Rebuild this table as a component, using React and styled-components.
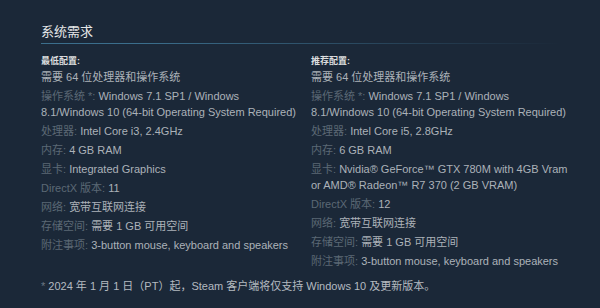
import React from "react";
import styled, { createGlobalStyle } from "styled-components";

const GlobalStyle = createGlobalStyle`
  html, body {
    margin: 0;
    padding: 0;
    background-color: #1b2838;
  }
  body {
    width: 600px;
    height: 308px;
    overflow: hidden;
  }
`;

const Page = styled.div`
  padding: 23px 40px 0 41px;
  font-family: "Liberation Sans", Arial, "Noto Sans CJK SC", sans-serif;
  font-size: 11px;
  color: #acb2b8;
`;

const Heading = styled.h2`
  margin: 0;
  font-size: 13px;
  font-weight: normal;
  line-height: 18px;
  color: #e6e7e8;
  padding-bottom: 2px;
  border-bottom: 1px solid transparent;
  border-image: linear-gradient(
      to right,
      #3b6e8c 0%,
      #3b6e8c 20%,
      rgba(59, 110, 140, 0.35) 70%,
      rgba(59, 110, 140, 0) 100%
    )
    1;
  margin-bottom: 9px;
`;

const Columns = styled.div`
  display: grid;
  grid-template-columns: 259px 260px;
  column-gap: 11px;
`;

const ColTitle = styled.div`
  font-size: 9px;
  font-weight: bold;
  line-height: 16px;
  color: #dcdedf;
`;

const List = styled.ul`
  margin: 0;
  padding: 0;
  list-style: none;
`;

const Item = styled.li`
  line-height: 16px;
  margin-bottom: 3px;
`;

const Label = styled.span`
  color: #5b6875;
`;

const Footer = styled.p`
  margin: 6px 0 0;
  line-height: 16px;
  color: #b4bac0;
`;

const Star = styled.span`
  color: #6b7784;
`;

const minimum = [
  [null, "需要 64 位处理器和操作系统"],
  ["操作系统 *:", "Windows 7.1 SP1 / Windows 8.1/Windows 10 (64-bit Operating System Required)"],
  ["处理器:", "Intel Core i3, 2.4GHz"],
  ["内存:", "4 GB RAM"],
  ["显卡:", "Integrated Graphics"],
  ["DirectX 版本:", "11"],
  ["网络:", "宽带互联网连接"],
  ["存储空间:", "需要 1 GB 可用空间"],
  ["附注事项:", "3-button mouse, keyboard and speakers"],
];

const recommended = [
  [null, "需要 64 位处理器和操作系统"],
  ["操作系统 *:", "Windows 7.1 SP1 / Windows 8.1/Windows 10 (64-bit Operating System Required)"],
  ["处理器:", "Intel Core i5, 2.8GHz"],
  ["内存:", "6 GB RAM"],
  ["显卡:", "Nvidia® GeForce™ GTX 780M with 4GB Vram or AMD® Radeon™ R7 370 (2 GB VRAM)"],
  ["DirectX 版本:", "12"],
  ["网络:", "宽带互联网连接"],
  ["存储空间:", "需要 1 GB 可用空间"],
  ["附注事项:", "3-button mouse, keyboard and speakers"],
];

const ReqColumn = ({ title, rows }) => (
  <div>
    <ColTitle>{title}</ColTitle>
    <List>
      {rows.map(([label, value], i) => (
        <Item key={i}>
          {label && <Label>{label}</Label>}
          {label ? " " : ""}
          {value}
        </Item>
      ))}
    </List>
  </div>
);

export default function App() {
  return (
    <>
      <GlobalStyle />
      <Page>
        <Heading>系统需求</Heading>
        <Columns>
          <ReqColumn title="最低配置:" rows={minimum} />
          <ReqColumn title="推荐配置:" rows={recommended} />
        </Columns>
        <Footer>
          <Star>*</Star> 2024 年 1 月 1 日（PT）起，Steam 客户端将仅支持 Windows 10 及更新版本。
        </Footer>
      </Page>
    </>
  );
}
